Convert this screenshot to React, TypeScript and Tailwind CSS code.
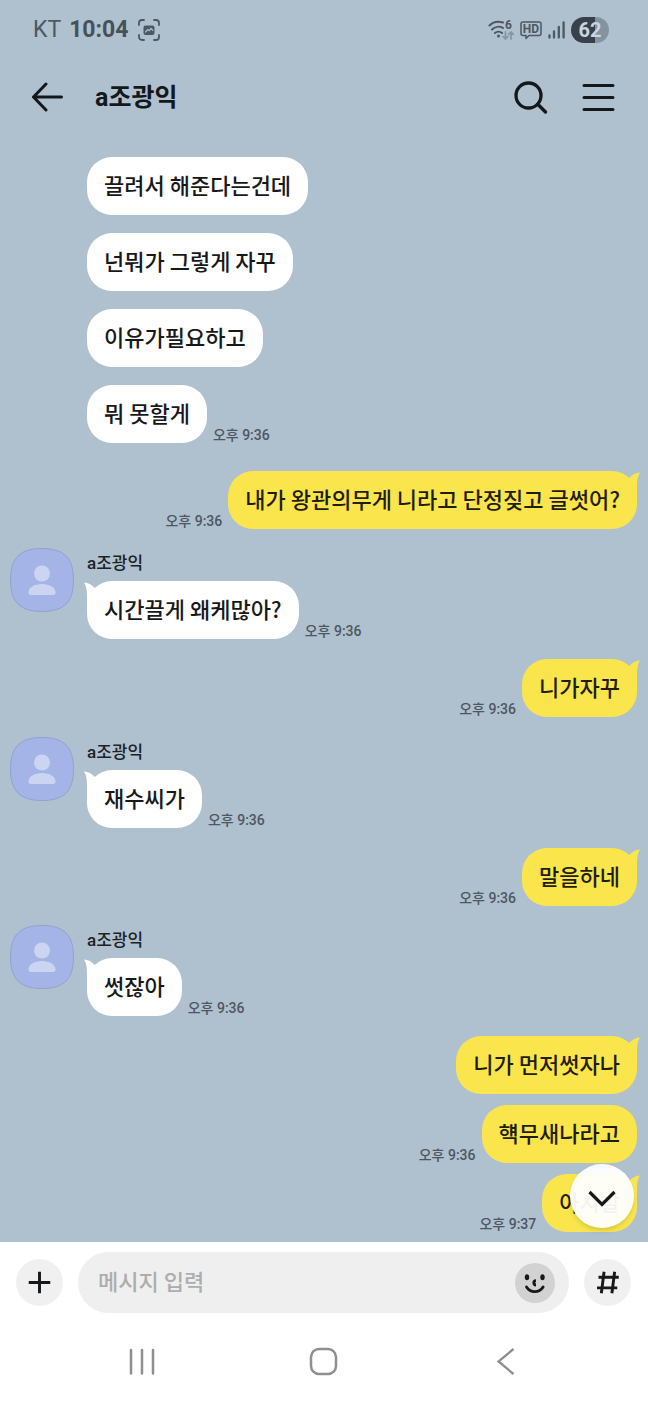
import { useState } from "react";

type Message = {
  id: number;
  text: string;
  time?: string;
  mine?: boolean;
  first?: boolean;
  spacing: string;
};

const contact = "a조광익";

const messages: Message[] = [
  { id: 1, text: "끌려서 해준다는건데", spacing: "" },
  { id: 2, text: "넌뭐가 그렇게 자꾸", spacing: "mt-[18px]" },
  { id: 3, text: "이유가필요하고", spacing: "mt-[18px]" },
  { id: 4, text: "뭐 못할게", time: "오후 9:36", spacing: "mt-[18px]" },
  { id: 5, text: "내가 왕관의무게 니라고 단정짖고 글썻어?", time: "오후 9:36", mine: true, first: true, spacing: "mt-7" },
  { id: 6, text: "시간끌게 왜케많아?", time: "오후 9:36", first: true, spacing: "mt-[19px]" },
  { id: 7, text: "니가자꾸", time: "오후 9:36", mine: true, first: true, spacing: "mt-5" },
  { id: 8, text: "재수씨가", time: "오후 9:36", first: true, spacing: "mt-5" },
  { id: 9, text: "말을하네", time: "오후 9:36", mine: true, first: true, spacing: "mt-5" },
  { id: 10, text: "썻잖아", time: "오후 9:36", first: true, spacing: "mt-[19px]" },
  { id: 11, text: "니가 먼저썻자나", mine: true, first: true, spacing: "mt-5" },
  { id: 12, text: "햭무새나라고", time: "오후 9:36", mine: true, spacing: "mt-[11px]" },
  { id: 13, text: "아시발", time: "오후 9:37", mine: true, first: true, spacing: "mt-[11px]" },
];

const StatusBar = () => (
  <div className="flex h-15 items-center justify-between pr-[39px] pl-[33px] text-[#4d5861]">
    <div className="flex items-center gap-2">
      <span className="text-[23px]">KT</span>
      <span className="text-[23px] font-bold text-[#46515a]">10:04</span>
      <svg className="ml-0.5 h-[22px] w-[22px]" viewBox="0 0 22 22" fill="none" stroke="currentColor" strokeWidth="1.8" strokeLinecap="round">
        <path d="M1 6V4a3 3 0 0 1 3-3h2M16 1h2a3 3 0 0 1 3 3v2M21 16v2a3 3 0 0 1-3 3h-2M6 21H4a3 3 0 0 1-3-3v-2" />
        <rect x="5.5" y="6.5" width="11" height="9.5" rx="2" fill="currentColor" stroke="none" />
        <path d="M7.5 13l2.2-2.5 1.5 1.2 1.8-2.2 1.8 1.8" stroke="#afc0cf" strokeWidth="1.2" />
      </svg>
    </div>
    <div className="flex items-center gap-1.5">
      {/* Wi-Fi 6 with traffic arrows */}
      <svg className="h-[22px] w-[26px]" viewBox="0 0 26 22" fill="none" stroke="currentColor" strokeWidth="2" strokeLinecap="round">
        <path d="M1.5 6.5C5 3 10 2 15 3.5M4 10.5c3-3 7.5-3.5 11-1.5M7 14c2-1.8 5-1.8 7 0" />
        <circle cx="10.5" cy="17" r="1.5" fill="currentColor" stroke="none" />
        <text x="17" y="10" fontSize="12" fontWeight="700" fill="currentColor" stroke="none">6</text>
        <path d="M17.5 13v7m-2.3-2.3l2.3 2.3 2.3-2.3M23 20v-7m-2.3 2.3L23 13l2.3 2.3" stroke="#8796a3" strokeWidth="1.8" />
      </svg>
      <svg className="h-[20px] w-[22px]" viewBox="0 0 22 20" fill="none" stroke="currentColor" strokeWidth="1.5">
        <path d="M3 2h16a2 2 0 0 1 2 2v9.5a2 2 0 0 1-2 2H9l-3 3v-3H3a2 2 0 0 1-2-2V4a2 2 0 0 1 2-2z" strokeLinejoin="round" />
        <text x="11" y="13" textAnchor="middle" fontSize="12" fontWeight="700" fill="currentColor" stroke="none">HD</text>
      </svg>
      <svg className="h-[18px] w-[17px]" viewBox="0 0 17 18" fill="none" stroke="currentColor" strokeWidth="2.3" strokeLinecap="round">
        <path d="M1.5 14.5V16.5M6 10.5v6M10.8 6v10.5M15.6 1.5v15" />
      </svg>
      <span className="flex h-[26px] w-[38px] items-center justify-center rounded-full bg-[linear-gradient(90deg,#384149_62%,#8493a0_62%)] text-xl font-bold text-[#c9d5df]">
        62
      </span>
    </div>
  </div>
);

const ChatHeader = () => (
  <header className="flex h-[74px] items-center px-8 text-[#15181b]">
    <button type="button" aria-label="뒤로" className="h-8 w-8">
      <svg viewBox="0 0 32 32" fill="none" stroke="currentColor" strokeWidth="3" strokeLinecap="round" strokeLinejoin="round">
        <path d="M14 3L1.5 16 14 29M1.5 16H29.5" />
      </svg>
    </button>
    <h1 className="ml-[31px] flex-1 pt-0.5 text-[25px] font-bold">{contact}</h1>
    <button type="button" aria-label="검색" className="h-[34px] w-[34px]">
      <svg viewBox="0 0 34 34" fill="none" stroke="currentColor" strokeWidth="3.3" strokeLinecap="round">
        <circle cx="14.5" cy="15.5" r="12.5" />
        <path d="M24 24.5L31.5 32" />
      </svg>
    </button>
    <button type="button" aria-label="메뉴" className="ml-[34px] h-[34px] w-[34px]">
      <svg viewBox="0 0 34 34" fill="none" stroke="currentColor" strokeWidth="3" strokeLinecap="round">
        <path d="M2 5.5h29M2 17.5h29M2 29.5h29" />
      </svg>
    </button>
  </header>
);

const Avatar = () => (
  <svg className="h-16 w-16 shrink-0" viewBox="0 0 64 64">
    <path
      d="M32 .5C54 .5 63.5 10 63.5 32S54 63.5 32 63.5.5 54 .5 32 10 .5 32 .5z"
      fill="#a4b4e7"
      stroke="#91a2cf"
    />
    <circle cx="32" cy="25.5" r="8" fill="#cbd5f1" />
    <path d="M18.5 44.5c0-5 6-8.500 13.500-8.500s13.500 3.500 13.500 8.500c0 1.700-1 2.500-2.500 2.500H21c-1.500 0-2.500-.8-2.500-2.500z" fill="#cbd5f1" />
  </svg>
);

const Bubble = ({ text, mine, first }: { text: string; mine?: boolean; first?: boolean }) => (
  <p
    className={`relative rounded-[25px] px-[17px] pt-3 pb-4 font-['Noto_Sans_CJK_KR',sans-serif] text-[22px] leading-[30px] font-medium ${
      mine ? "bg-[#fae64c] text-[#1f1d0c]" : "bg-white text-[#17181a]"
    }`}
  >
    {first && (
      <svg
        className={`absolute top-0 h-6 w-5 ${mine ? "-right-[3px] -scale-x-100 text-[#fae64c]" : "-left-[3px] text-white"}`}
        viewBox="0 0 20 24"
        fill="currentColor"
      >
        <path d="M0 1.5C4 2 8 3.500 10.500 6.800L17 12 3 25V16C3 10 2.500 5 0 1.500z" />
      </svg>
    )}
    <span className="relative">{text}</span>
  </p>
);

const Time = ({ value }: { value: string }) => (
  <time className="text-sm leading-[15px] font-medium text-[#4d575f]">{value}</time>
);

const MessageRow = ({ message }: { message: Message }) => {
  const { text, time, mine, first, spacing } = message;

  if (mine) {
    return (
      <li className={`flex items-end justify-end gap-1.5 pr-[11px] ${spacing}`}>
        {time && <Time value={time} />}
        <Bubble text={text} mine first={first} />
      </li>
    );
  }

  return (
    <li className={`flex gap-[13px] pl-2.5 ${spacing}`}>
      {first ? <Avatar /> : <div className="w-16 shrink-0" />}
      <div>
        {first && <div className="mb-[3px] text-[17px] leading-[30px] font-medium text-[#1d2226]">{contact}</div>}
        <div className="flex items-end gap-1.5">
          <Bubble text={text} first={first} />
          {time && <Time value={time} />}
        </div>
      </div>
    </li>
  );
};

const MessageInput = () => {
  const [value, setValue] = useState("");

  return (
    <form className="flex items-center gap-[15px] pt-2.5 pr-[17px] pl-4 text-[#17181a]" onSubmit={(e) => e.preventDefault()}>
      <button type="button" aria-label="첨부" className="h-[47px] w-[47px] shrink-0 rounded-full bg-[#f0f0f0]">
        <svg viewBox="0 0 48 48" fill="none" stroke="currentColor" strokeWidth="3">
          <path d="M24 13v22M13 24h22" />
        </svg>
      </button>
      <div className="flex h-[61px] min-w-0 flex-1 items-center rounded-full bg-[#efefef] pr-3.5 pl-5">
        <input
          type="text"
          aria-label="메시지 입력"
          placeholder="메시지 입력"
          value={value}
          onChange={(e) => setValue(e.target.value)}
          className="min-w-0 flex-1 bg-transparent pb-1 font-['Noto_Sans_CJK_KR',sans-serif] text-[22px] font-medium outline-none placeholder:text-[#adadad]"
        />
        <button type="button" aria-label="이모티콘" className="h-10 w-10 shrink-0 rounded-full bg-[#d2d2d2]">
          <svg viewBox="0 0 40 40" fill="none" stroke="currentColor" strokeLinecap="round">
            <ellipse cx="12" cy="14.3" rx="2.2" ry="3" fill="currentColor" stroke="none" />
            <ellipse cx="27.5" cy="14.3" rx="2.2" ry="3" fill="currentColor" stroke="none" />
            <path d="M21 17.6a2.2 2.2 0 1 0 0 4.400" strokeWidth="2.8" strokeLinecap="butt" />
            <path d="M11.5 24c2 3.200 5 4.700 8.300 4.700s6.300-1.500 8.300-4.700" strokeWidth="2.8" />
          </svg>
        </button>
      </div>
      <button type="button" aria-label="샵 검색" className="h-[47px] w-[47px] shrink-0 rounded-full bg-[#f0f0f0]">
        <svg viewBox="0 0 48 48" fill="none" stroke="currentColor" strokeWidth="3">
          <path d="M20.5 13l-2.8 22M31.3 13l-2.8 22M14.8 18.7h20.7M13.3 29.5H34" />
        </svg>
      </button>
    </form>
  );
};

const NavBar = () => (
  <nav className="grid h-[91px] grid-cols-3 items-center justify-items-center px-[51px] pt-1.5 text-[#8f8f8f]">
    <button type="button" aria-label="최근 앱" className="h-8 w-8">
      <svg viewBox="0 0 32 32" fill="none" stroke="currentColor" strokeWidth="2.5" strokeLinecap="round">
        <path d="M5 4v23.5M16 4v23.5M27 4v23.5" />
      </svg>
    </button>
    <button type="button" aria-label="홈" className="h-8 w-8">
      <svg viewBox="0 0 32 32" fill="none" stroke="currentColor" strokeWidth="2.5">
        <rect x="3" y="3" width="25" height="25" rx="8" />
      </svg>
    </button>
    <button type="button" aria-label="이전" className="h-8 w-8">
      <svg viewBox="0 0 32 32" fill="none" stroke="currentColor" strokeWidth="2.3">
        <path d="M23.5 3L8.5 15.5l15 12.5" />
      </svg>
    </button>
  </nav>
);

const App = () => {
  return (
    <div className="flex min-h-screen flex-col bg-[#afc0cf] font-[Roboto,'Noto_Sans_CJK_KR',sans-serif]">
      <StatusBar />
      <ChatHeader />
      <main className="relative flex-1 pt-[23px] pb-2.5">
        <ul>
          {messages.map((message) => (
            <MessageRow key={message.id} message={message} />
          ))}
        </ul>
        <button
          type="button"
          aria-label="맨 아래로"
          className="absolute right-3.5 bottom-3.5 h-16 w-16 rounded-full bg-white/95 text-[#17181a] shadow-md"
        >
          <svg viewBox="0 0 64 64" fill="none" stroke="currentColor" strokeWidth="3.2">
            <path d="M19.5 28L32 40.5 44.5 28" />
          </svg>
        </button>
      </main>
      <footer className="bg-white">
        <MessageInput />
        <NavBar />
      </footer>
    </div>
  );
};

export default App;
